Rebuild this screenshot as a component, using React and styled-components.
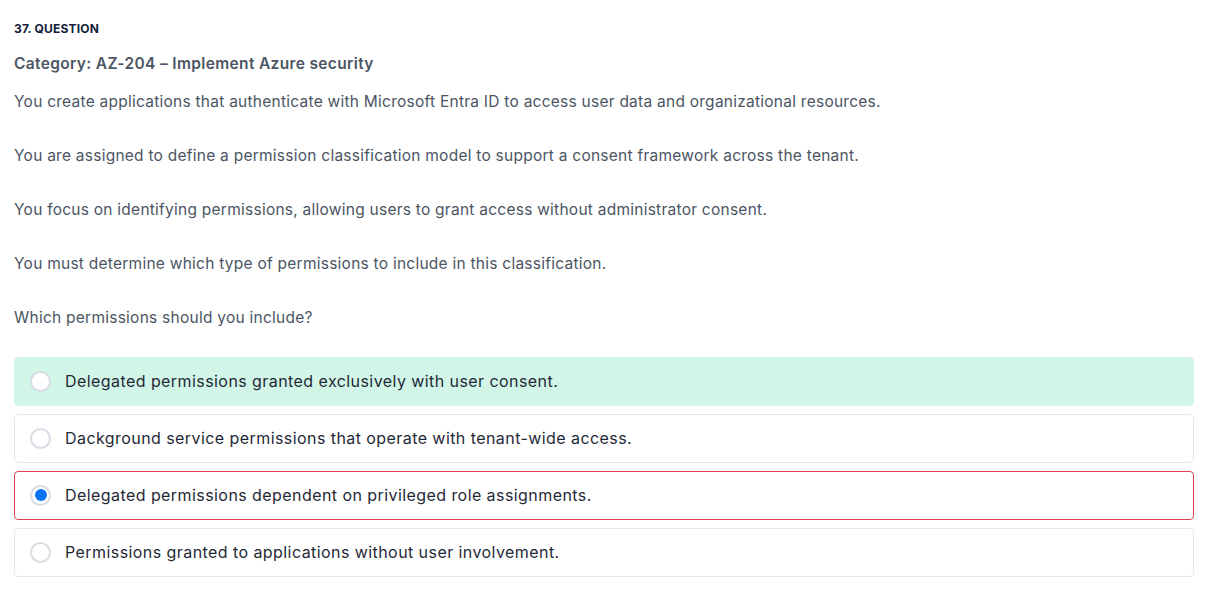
import styled, { createGlobalStyle, css } from "styled-components";

const GlobalStyle = createGlobalStyle`
  html, body {
    margin: 0;
    padding: 0;
    background: #fff;
    font-family: Inter, "Noto Sans", "Liberation Sans", sans-serif;
  }
`;

const Page = styled.div`
  padding: 21px 35px 0 14px;
`;

const Label = styled.div`
  font-size: 12px;
  font-weight: 700;
  color: #13223a;
  line-height: 16px;
  letter-spacing: 0.2px;
`;

const Category = styled.div`
  margin-top: 16px;
  font-size: 15.5px;
  font-weight: 600;
  color: #4b5563;
  line-height: 22px;
  letter-spacing: 0.35px;
`;

const Text = styled.p`
  margin: 0;
  margin-top: ${({ $first }) => ($first ? "15px" : "30px")};
  font-size: 15.5px;
  line-height: 24px;
  letter-spacing: 0.25px;
  color: #4b5563;
`;

const Options = styled.div`
  margin-top: 27px;
  display: flex;
  flex-direction: column;
  gap: 8px;
`;

const stateStyles = {
  correct: css`
    background: #d1f5e7;
    border-color: #d1f5e7;
  `,
  wrong: css`
    background: #fff;
    border-color: #e0424f;
  `,
  plain: css`
    background: #fff;
    border-color: #e5e7eb;
  `,
};

const Option = styled.label`
  display: flex;
  align-items: center;
  gap: 14px;
  height: 49px;
  box-sizing: border-box;
  padding: 0 15px 1px;
  border: 1px solid;
  border-radius: 4px;
  ${({ $state }) => stateStyles[$state] || stateStyles.plain}
`;

const Radio = styled.span`
  width: 21px;
  height: 21px;
  box-sizing: border-box;
  border-radius: 50%;
  border: 2px solid #d8dce5;
  background: #fff;
  flex-shrink: 0;
  display: flex;
  align-items: center;
  justify-content: center;

  ${({ $checked }) =>
    $checked &&
    css`
      &::after {
        content: "";
        width: 12px;
        height: 12px;
        border-radius: 50%;
        background: #0a74f5;
      }
    `}
`;

const OptionText = styled.span`
  font-size: 16px;
  letter-spacing: 0.43px;
  color: #1f2937;
  line-height: 22px;
`;

const paragraphs = [
  "You create applications that authenticate with Microsoft Entra ID to access user data and organizational resources.",
  "You are assigned to define a permission classification model to support a consent framework across the tenant.",
  "You focus on identifying permissions, allowing users to grant access without administrator consent.",
  "You must determine which type of permissions to include in this classification.",
  "Which permissions should you include?",
];

const answers = [
  { text: "Delegated permissions granted exclusively with user consent.", state: "correct" },
  { text: "Dackground service permissions that operate with tenant-wide access.", state: "plain" },
  { text: "Delegated permissions dependent on privileged role assignments.", state: "wrong", checked: true },
  { text: "Permissions granted to applications without user involvement.", state: "plain" },
];

export default function App() {
  return (
    <>
      <GlobalStyle />
      <Page>
        <Label>37. QUESTION</Label>
        <Category>Category: AZ-204 – Implement Azure security</Category>
        {paragraphs.map((p, i) => (
          <Text key={i} $first={i === 0}>
            {p}
          </Text>
        ))}
        <Options>
          {answers.map((a, i) => (
            <Option key={i} $state={a.state}>
              <Radio $checked={a.checked} />
              <OptionText>{a.text}</OptionText>
            </Option>
          ))}
        </Options>
      </Page>
    </>
  );
}
